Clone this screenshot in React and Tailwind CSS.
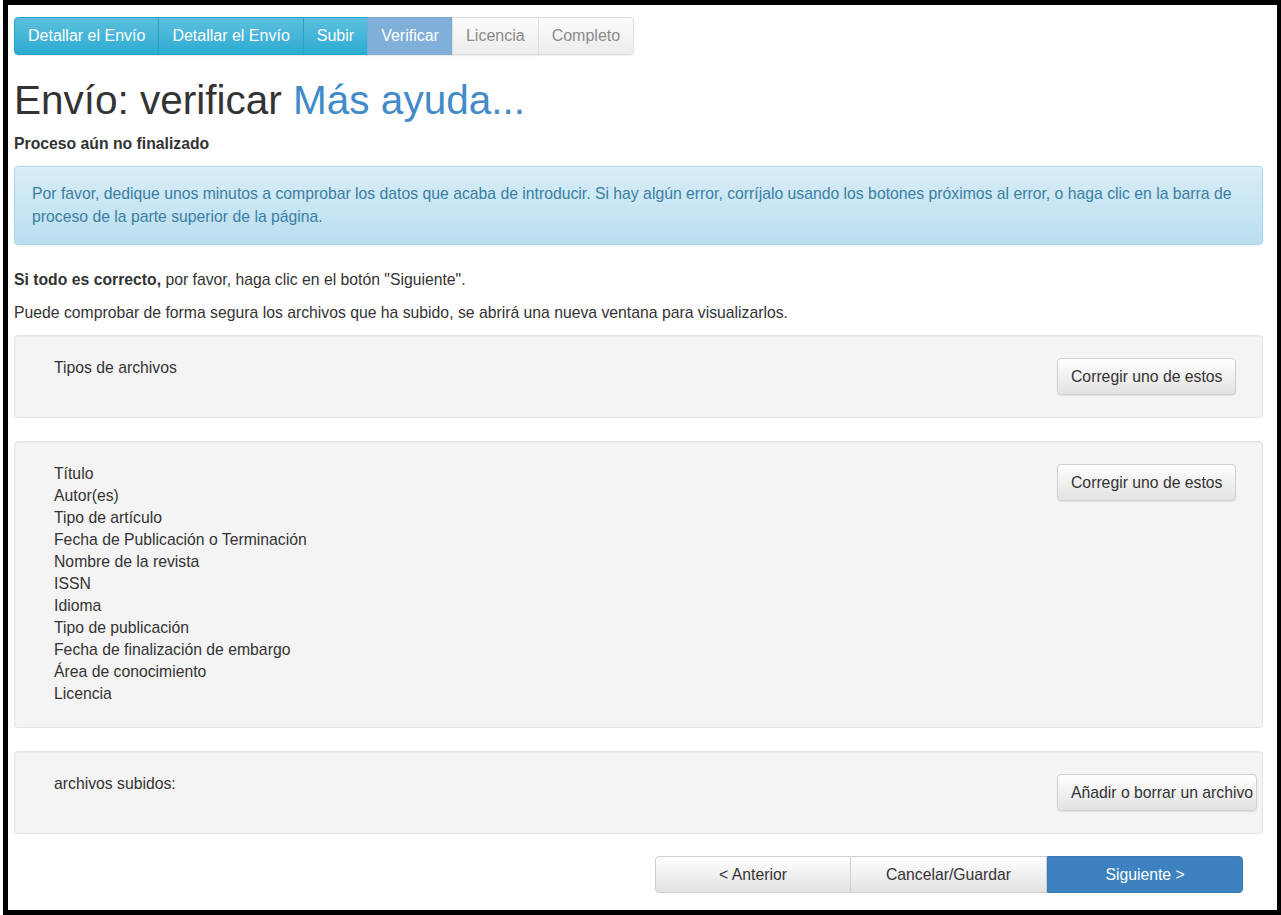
import React from "react";

const steps = [
  { label: "Detallar el Envío", kind: "done" },
  { label: "Detallar el Envío", kind: "done" },
  { label: "Subir", kind: "done" },
  { label: "Verificar", kind: "current" },
  { label: "Licencia", kind: "todo" },
  { label: "Completo", kind: "todo" },
];

const stepClass = {
  done: "bg-linear-to-b from-[#5bc0de] to-[#2aabd2] border-[#28a4c9] text-white",
  current: "bg-[#80afda] border-[#7aa9d4] text-white",
  todo: "bg-linear-to-b from-[#fbfbfb] to-[#ececec] border-[#dedede] text-[#8a8a8a]",
};

const metadata = [
  "Título",
  "Autor(es)",
  "Tipo de artículo",
  "Fecha de Publicación o Terminación",
  "Nombre de la revista",
  "ISSN",
  "Idioma",
  "Tipo de publicación",
  "Fecha de finalización de embargo",
  "Área de conocimiento",
  "Licencia",
];

const DefaultButton = ({ children, wide }) => (
  <button
    className={`h-[37px] pl-[13px] border border-[#cfcfcf] rounded-[4px] bg-linear-to-b from-white to-[#e2e2e2] text-[#333] text-[15.75px] whitespace-nowrap overflow-hidden text-left shadow-[0_1px_1px_rgba(0,0,0,0.08)] ${
      wide ? "w-[200px] pr-0" : "pr-[13px]"
    }`}
  >
    {children}
  </button>
);

const Well = ({ children, button, wide }) => (
  <div className="flex items-start bg-[#f4f4f4] border border-[#e3e3e3] rounded-[4px] pt-[21px] pb-[22px] shadow-[inset_0_1px_1px_rgba(0,0,0,0.04)]">
    <div className="flex-1 pl-[39px] leading-[22px]">{children}</div>
    <div className="w-[205px] shrink-0 mt-[1px]">
      <DefaultButton wide={wide}>{button}</DefaultButton>
    </div>
  </div>
);

export default function App() {
  return (
    <div className="w-[1278px] h-[915px] ml-[3px] bg-white border-black border-t-[5px] border-l-[5px] border-r-[4px] border-b-[5px] font-['Liberation_Sans',Arial,sans-serif] text-[#333] text-[15.75px]">
      <div className="w-[1255px] pl-[6px] pt-[12px]">
        {/* barra de progreso */}
        <div className="flex">
          {steps.map((s, i) => (
            <div
              key={i}
              className={`h-[38px] flex items-center px-[13px] border text-[16px] shadow-[0_1px_1px_rgba(0,0,0,0.07)] ${stepClass[s.kind]} ${
                i === 0 ? "rounded-l-[4px]" : "-ml-px"
              } ${i === steps.length - 1 ? "rounded-r-[4px]" : ""}`}
            >
              {s.label}
            </div>
          ))}
        </div>

        <h1 className="mt-[23px] text-[40.5px] leading-[44px] font-normal">
          Envío: verificar <span className="text-[#428bca]">Más ayuda...</span>
        </h1>
        <div className="mt-[11px] font-bold leading-[22px]">Proceso aún no finalizado</div>

        <div className="mt-[11px] w-[1249px] rounded-[4px] border border-[#a6d5ec] bg-linear-to-b from-[#d9edf7] to-[#b9def0] text-[#3b7fa3] pl-[17px] pr-[17px] pt-[15px] pb-[16px] leading-[23px] shadow-[inset_0_1px_0_rgba(255,255,255,0.25),0_1px_2px_rgba(0,0,0,0.05)]">
          Por favor, dedique unos minutos a comprobar los datos que acaba de introducir. Si hay algún error, corríjalo usando los botones próximos al error, o haga clic en la barra de proceso de la parte superior de la página.
        </div>

        <p className="mt-[24px] leading-[22px]">
          <b>Si todo es correcto,</b> por favor, haga clic en el botón "Siguiente".
        </p>
        <p className="mt-[11px] leading-[22px]">
          Puede comprobar de forma segura los archivos que ha subido, se abrirá una nueva ventana para visualizarlos.
        </p>

        <div className="w-[1249px] mt-[11px] flex flex-col gap-[23px]">
          <Well button="Corregir uno de estos">Tipos de archivos</Well>
          <Well button="Corregir uno de estos">
            {metadata.map((m) => (
              <div key={m}>{m}</div>
            ))}
          </Well>
          <Well button="Añadir o borrar un archivo" wide>
            archivos subidos:
          </Well>
        </div>

        <div className="w-[1249px] flex justify-end pr-[20px] mt-[22px]">
          <button className="w-[196px] h-[37px] border border-[#cfcfcf] rounded-l-[4px] bg-linear-to-b from-white to-[#e2e2e2] text-[15.75px]">
            &lt; Anterior
          </button>
          <button className="w-[196px] h-[37px] border border-l-0 border-[#cfcfcf] bg-linear-to-b from-white to-[#e2e2e2] text-[15.75px]">
            Cancelar/Guardar
          </button>
          <button className="w-[196px] h-[37px] border border-[#3a7dbb] rounded-r-[4px] bg-[#3d81c1] text-white text-[15.75px]">
            Siguiente &gt;
          </button>
        </div>
      </div>
    </div>
  );
}
